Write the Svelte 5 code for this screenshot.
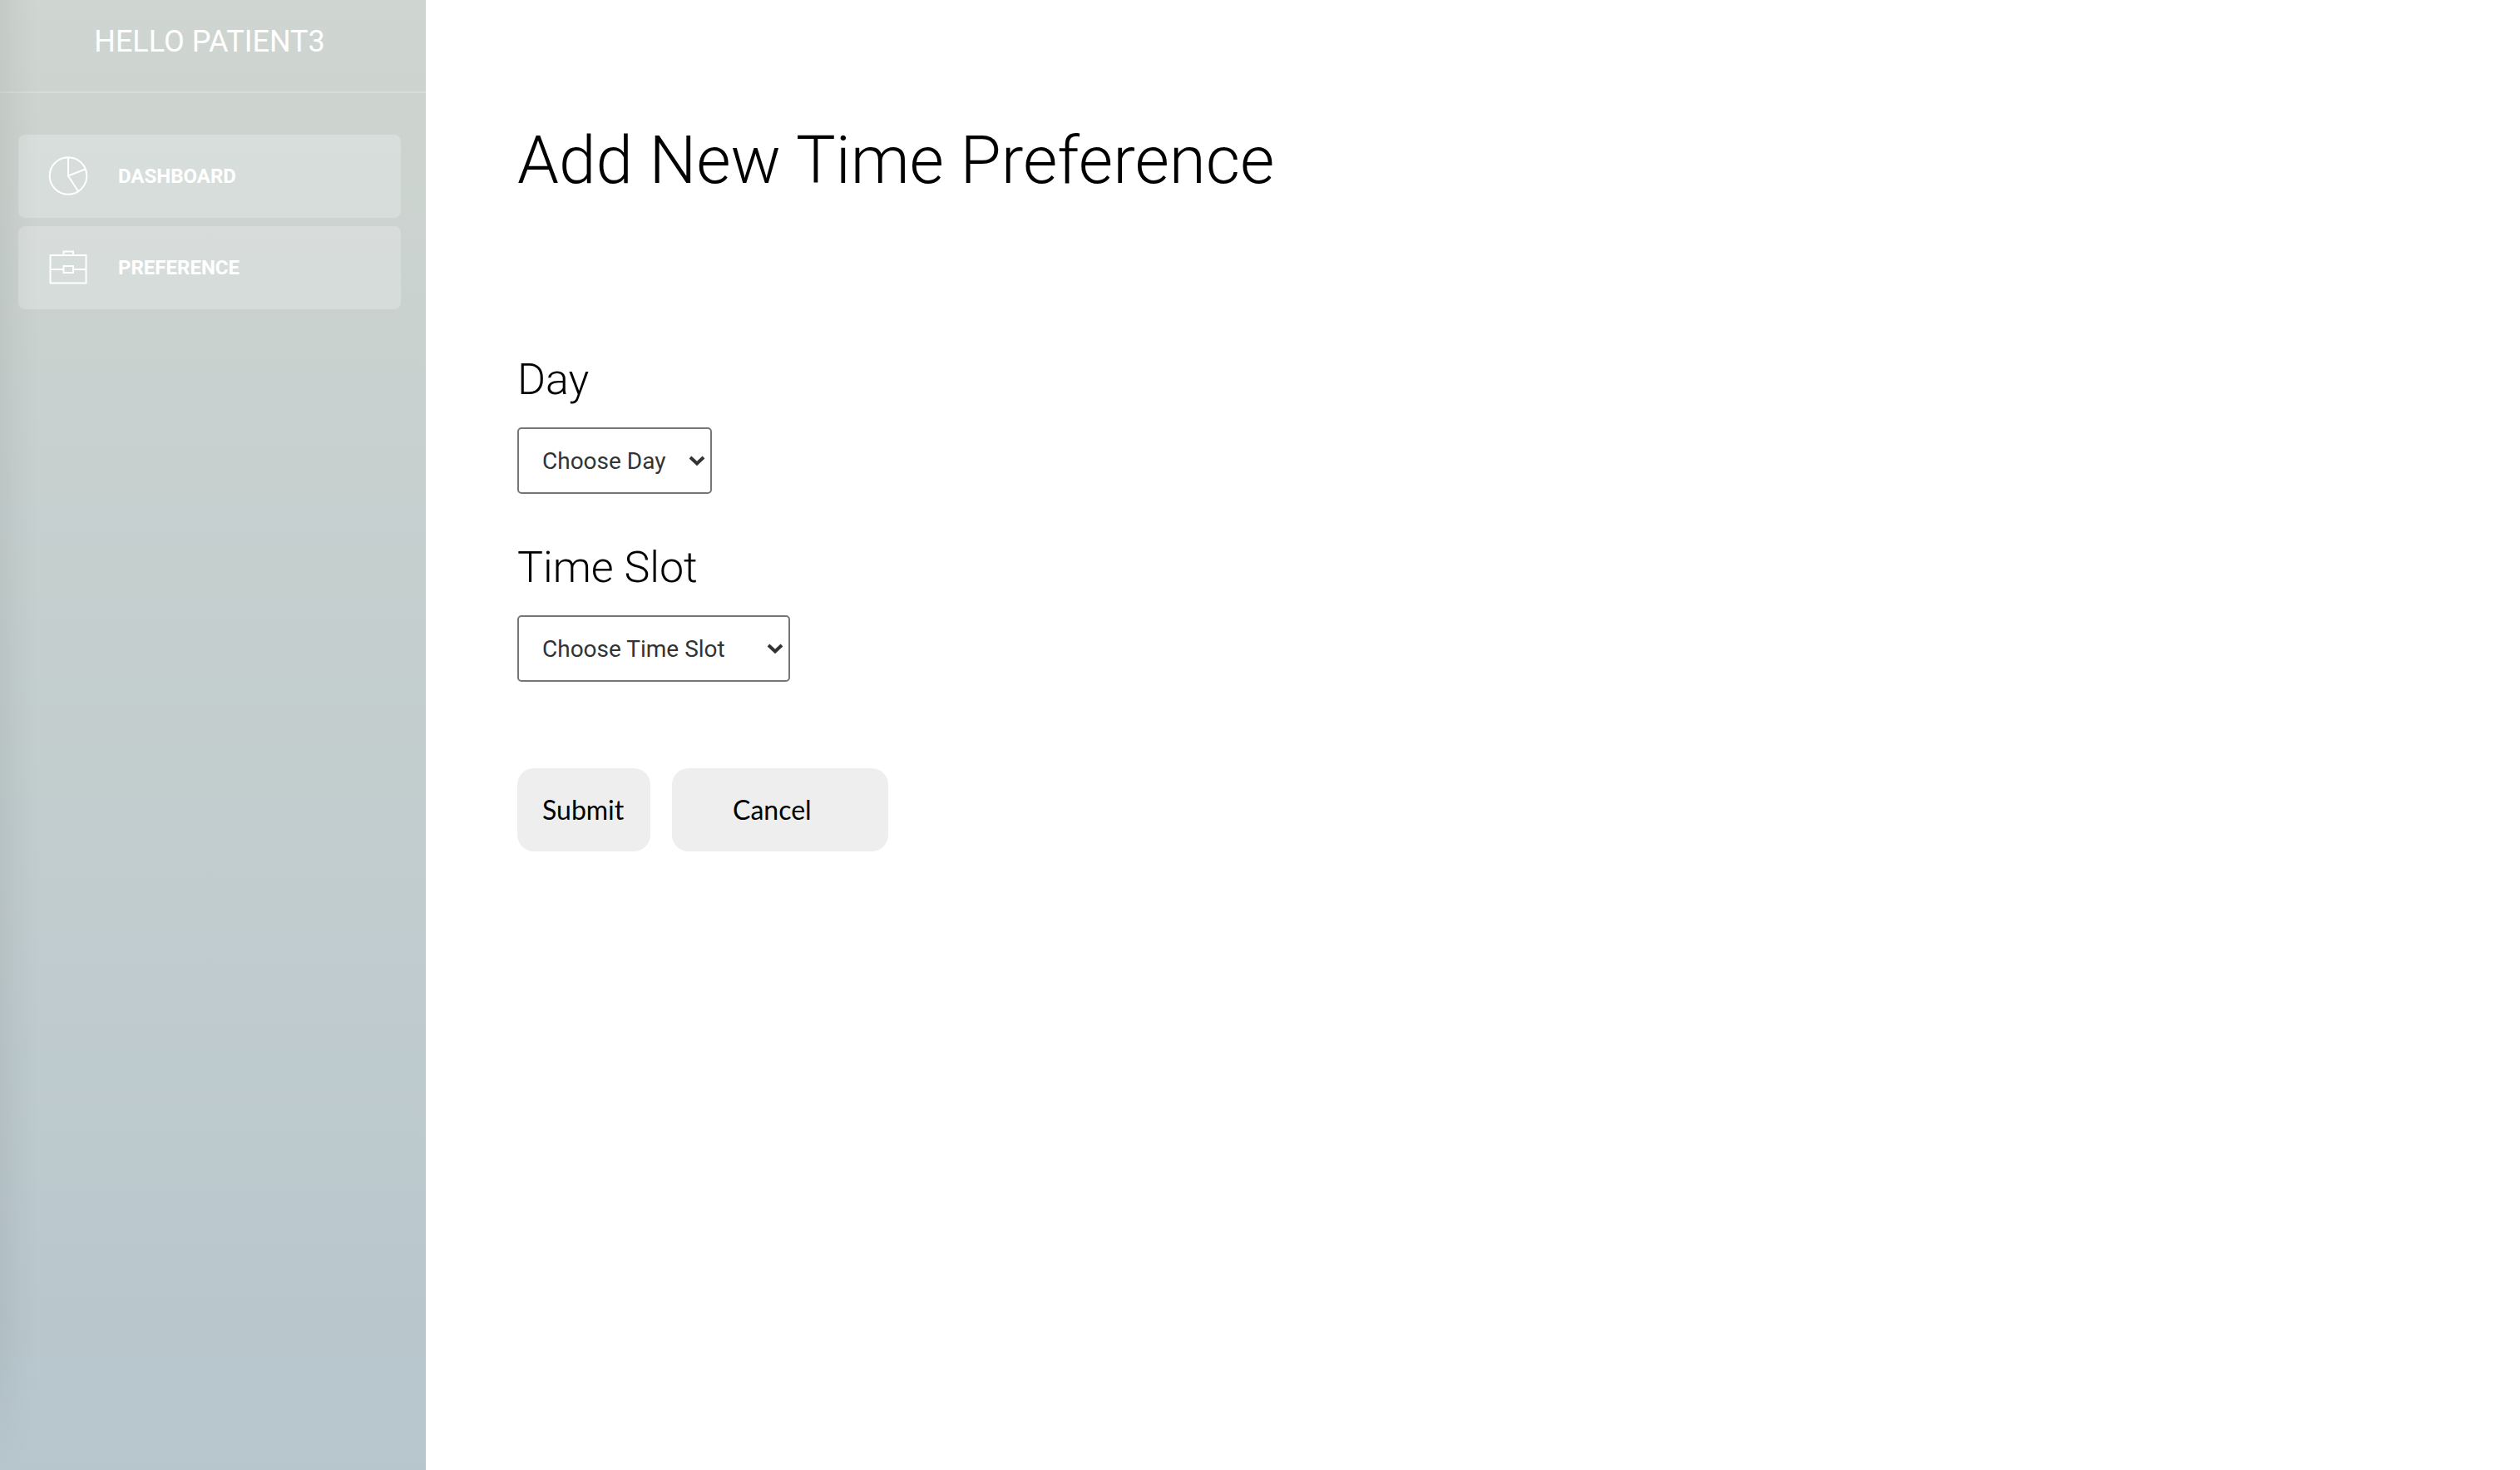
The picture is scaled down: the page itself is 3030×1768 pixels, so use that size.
<script>
  const links = [
    { label: 'Dashboard', icon: 'pie' },
    { label: 'Preference', icon: 'case' },
  ];
  const days = ['Monday', 'Tuesday', 'Wednesday', 'Thursday', 'Friday', 'Saturday', 'Sunday'];
  const slots = ['8:00 - 12:00', '12:00 - 16:00', '16:00 - 20:00'];
  let day = $state('');
  let slot = $state('');
</script>

{#snippet chevron()}
  <svg class="chevron" viewBox="0 0 20 12" aria-hidden="true">
    <path d="M2 2l8 7.500 8-7.500" />
  </svg>
{/snippet}

<div class="page">
  <aside class="sidebar">
    <div class="brand">Hello patient3</div>
    <nav>
      {#each links as link}
        <a href="#{link.label.toLowerCase()}">
          <svg class="icon" viewBox="0 0 48 48" aria-hidden="true">
            {#if link.icon === 'pie'}
              <circle cx="24" cy="23.500" r="22.300" />
              <path d="M24 1.500V23.500L44.500 15.500M24 23.500L36 42" />
            {:else}
              <path d="M2.500 9h43v33.500H2.500zM18.500 9V4.500h11.500V9M2.500 26H18.500M30 26h15.500M18.500 22h11.500v8H18.500z" />
            {/if}
          </svg>
          <span>{link.label}</span>
        </a>
      {/each}
    </nav>
  </aside>

  <main>
    <h1>Add New Time Preference</h1>
    <form onsubmit={(e) => e.preventDefault()}>
      <div class="field">
        <label for="day">Day</label>
        <div class="select">
          <select id="day" bind:value={day}>
            <option value="">Choose Day</option>
            {#each days as d}<option>{d}</option>{/each}
          </select>
          {@render chevron()}
        </div>
      </div>
      <div class="field">
        <label for="slot">Time Slot</label>
        <div class="select wide">
          <select id="slot" bind:value={slot}>
            <option value="">Choose Time Slot</option>
            {#each slots as s}<option>{s}</option>{/each}
          </select>
          {@render chevron()}
        </div>
      </div>
      <div class="actions">
        <button type="submit">Submit</button>
        <button type="button" class="cancel">Cancel</button>
      </div>
    </form>
  </main>
</div>

<style>
  :global(body) {
    margin: 0;
    background: #fff;
  }
  .page {
    display: flex;
    min-height: 100vh;
    font-family: Roboto, 'Liberation Sans', sans-serif;
    color: #000;
  }
  .sidebar {
    position: relative;
    flex: 0 0 512px;
    background: linear-gradient(#cfd5d0, #b7c6cd);
    color: #fff;
  }
  .sidebar::before {
    content: '';
    position: absolute;
    inset: 0 auto 0 0;
    width: 44px;
    background: linear-gradient(to right, rgba(0, 0, 0, 0.05), rgba(0, 0, 0, 0.02) 50%, transparent);
    mask-image: linear-gradient(to top, transparent, #000 180px);
    pointer-events: none;
  }
  .brand {
    padding: 28px 30px 38px 22px;
    border-bottom: 2px solid rgba(255, 255, 255, 0.2);
    font-size: 36px;
    line-height: 44px;
    text-align: center;
    text-transform: uppercase;
  }
  nav {
    display: flex;
    flex-direction: column;
    gap: 10px;
    padding: 50px 30px 0 22px;
  }
  nav a {
    display: flex;
    align-items: center;
    gap: 36px;
    height: 100px;
    padding: 0 36px;
    box-sizing: border-box;
    border-radius: 8px;
    background: rgba(255, 255, 255, 0.23);
    color: #fff;
    font-size: 24px;
    font-weight: 700;
    line-height: 60px;
    text-decoration: none;
    text-transform: uppercase;
  }
  .icon {
    width: 48px;
    height: 48px;
    fill: none;
    stroke: #fff;
    stroke-width: 2;
  }
  main {
    flex: 1;
    padding: 145px 110px;
  }
  h1 {
    margin: 0 0 186px;
    font-size: 80px;
    font-weight: 300;
    line-height: 96px;
  }
  .field {
    display: flex;
    flex-direction: column;
    align-items: flex-start;
    gap: 27px;
    margin-bottom: 59px;
  }
  label {
    font-size: 52px;
    font-weight: 300;
    line-height: 60px;
  }
  .select {
    display: grid;
    align-items: center;
    width: 234px;
  }
  .select.wide {
    width: 328px;
  }
  select,
  .chevron {
    grid-area: 1 / 1;
  }
  select {
    appearance: none;
    width: 100%;
    height: 80px;
    padding: 0 28px;
    border: 2px solid #767676;
    border-radius: 5px;
    background: #fff;
    color: #333;
    font-family: inherit;
    font-size: 28px;
  }
  .chevron {
    justify-self: end;
    width: 20px;
    height: 12px;
    margin-right: 8px;
    fill: none;
    stroke: #333;
    stroke-width: 4;
    pointer-events: none;
  }
  .actions {
    display: flex;
    gap: 26px;
    padding-top: 45px;
  }
  button {
    height: 100px;
    min-width: 160px;
    padding: 0 30px 2px;
    border: 0;
    border-radius: 20px;
    background: #eee;
    color: #000;
    font-family: Lato, 'Liberation Sans', sans-serif;
    font-size: 32px;
    text-align: left;
  }
  .cancel {
    width: 260px;
    padding-left: 73px;
  }
</style>
